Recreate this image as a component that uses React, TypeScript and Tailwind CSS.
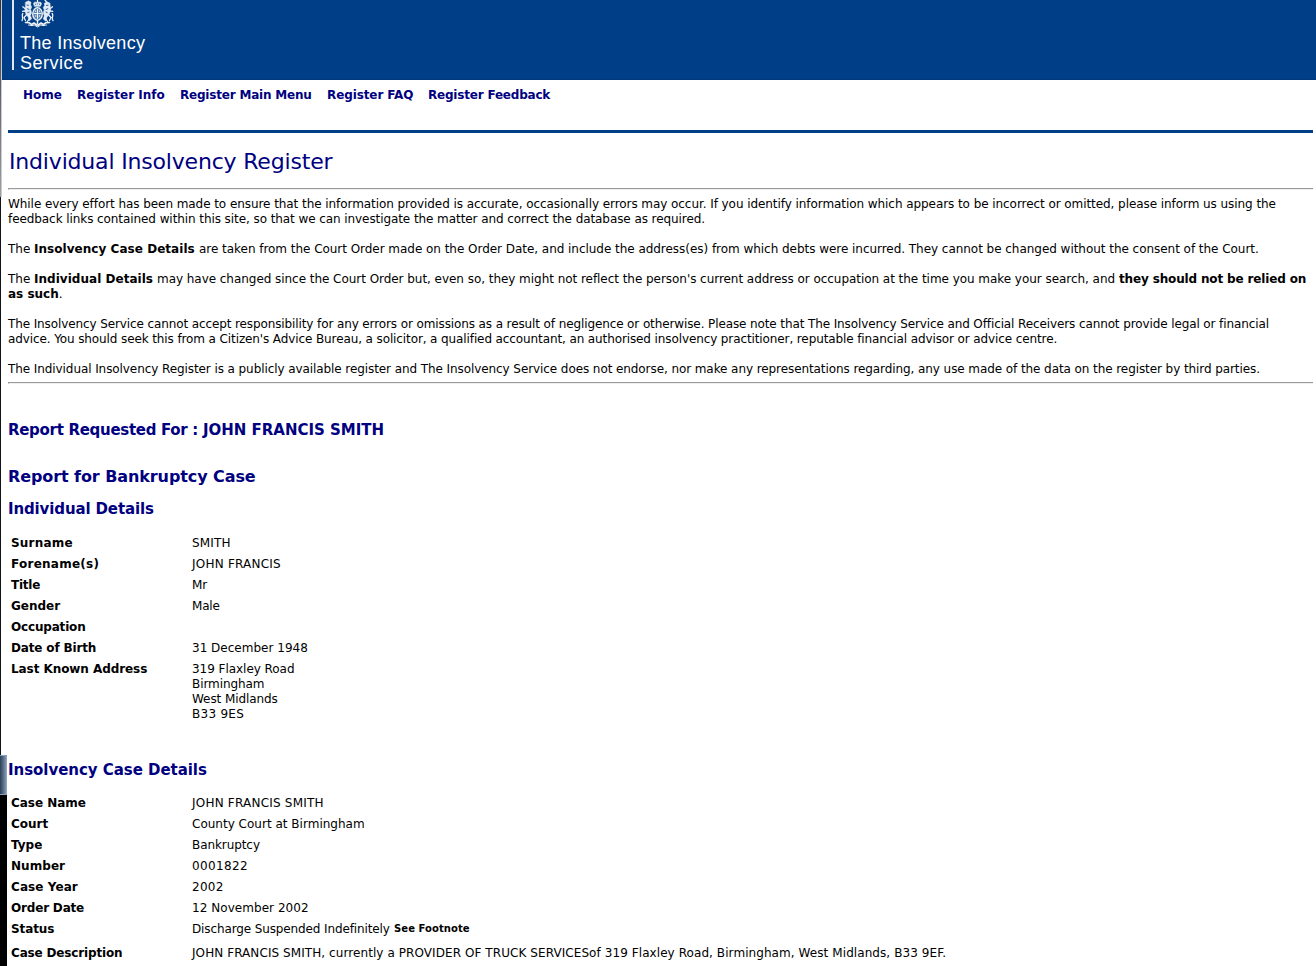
import type { ReactNode } from "react";

function Crest() {
  return (
    <svg width="34" height="28" viewBox="0 0 34 28" fill="none" stroke="#eef3f8" strokeLinecap="round" strokeLinejoin="round">
      {/* crown */}
      <path d="M13 4.800c-1.200-2 .2-3.300 3.500-2.300 3.300-1 4.700.3 3.500 2.300l-.6 1.400h-5.800z" strokeWidth=".7" fill="#dbe5f0" />
      <path d="M16.500 0v2" strokeWidth="1.200" />
      <path d="M14.500 4.300h.2M16.500 3.900h.1M18.400 4.300h.2" stroke="#003f87" strokeWidth=".8" />
      {/* lion */}
      <path d="M4.500 2.200L7.500.8l2.600 1.400-.5 2.600 1.100 2.200-1 2.600 1 3.200-1.200 2.800 1.200 3.200-2.600 2.200-1-4-2.200-2.600-1-4 .4-3.200z" fill="#e2eaf3" strokeWidth=".4" />
      <path d="M4 8.500L1.800 6.800M4.300 11L1.500 11.300M5.200 15.200L3 17.500 4.500 20.500M1 20.500c2-2.500-1-4.500.8-7M8.500 18.500L6.500 21.500" strokeWidth="1.300" />
      <path d="M6 5l1.500.3M6.300 8.800l1.700.6M6.800 12.500l1.200-.4" stroke="#003f87" strokeWidth=".8" />
      {/* unicorn */}
      <path d="M28.800 3L26 1.800l-3 1.600.8 1.800-1.600 2.300 1 2.400-1.100 3 1.200 2.900-1.100 3.200 2.600 2.200 1.100-4 2.200-2.600 1.500-4-.2-3.600z" fill="#e2eaf3" strokeWidth=".4" />
      <path d="M25.500 2L24 0M29.300 8.500l2.200-1.700M29 11l2.800.3M27.800 15.200l2.200 2.300-1.500 3M32 20.500c-2-2.500 1-4.500-.8-7M24.500 18.500l2 3" strokeWidth="1.300" />
      <path d="M27 5.200l-1.500.3M26.800 8.800l-1.700.6M26.200 12.500l-1.200-.4" stroke="#003f87" strokeWidth=".8" />
      {/* shield and garter */}
      <ellipse cx="16.500" cy="14" rx="4.800" ry="6.300" strokeWidth="1.300" fill="#5c86b3" />
      <path d="M16.500 9.500v9M13 13.500h7" strokeWidth="1" />
      <path d="M14.500 11.200h.1M18.500 11.200h.1M14.700 16h.1M18.300 16h.1" strokeWidth="1.300" />
      {/* motto ribbon */}
      <path d="M4.500 22.500l3.500.2 2.500 1.800 2.500-1.500 3.500 2.500 3.500-2.500 2.500 1.500 2.500-1.800 3.500-.2" strokeWidth="1.600" />
      <path d="M7.500 25l3.500.6 2.200-.6 3.300 2 3.300-2 2.200.6 3.500-.6" strokeWidth="1" />
      <path d="M16.500 20.500v3" strokeWidth="1.400" />
    </svg>
  );
}

const nav = [
  { label: "Home", cls: "w-[54px] tracking-[0.02px]" },
  { label: "Register Info", cls: "w-[103px] tracking-[0.01px]" },
  { label: "Register Main Menu", cls: "w-[147px] tracking-[-0.2px]" },
  { label: "Register FAQ", cls: "w-[101px] tracking-[-0.1px]" },
  { label: "Register Feedback", cls: "tracking-[-0.2px]" },
];

type RowData = { label: string; lt: string; value: ReactNode; vt: string };

const individual: RowData[] = [
  { label: "Surname", lt: "tracking-[0.2px]", value: "SMITH", vt: "tracking-[0.16px]" },
  { label: "Forename(s)", lt: "tracking-[0.26px]", value: "JOHN FRANCIS", vt: "tracking-[0.22px]" },
  { label: "Title", lt: "tracking-[-0.25px]", value: "Mr", vt: "" },
  { label: "Gender", lt: "", value: "Male", vt: "tracking-[-0.2px]" },
  { label: "Occupation", lt: "tracking-[-0.18px]", value: "", vt: "" },
  { label: "Date of Birth", lt: "tracking-[-0.16px]", value: "31 December 1948", vt: "tracking-[0.01px]" },
  {
    label: "Last Known Address",
    lt: "tracking-[-0.07px]",
    value: (
      <>
        <div className="tracking-[-0.04px]">319 Flaxley Road</div>
        <div className="tracking-[-0.08px]">Birmingham</div>
        <div className="tracking-[-0.08px]">West Midlands</div>
        <div className="tracking-[0.28px]">B33 9ES</div>
      </>
    ),
    vt: "",
  },
];

const insolvency: RowData[] = [
  { label: "Case Name", lt: "tracking-[-0.03px]", value: "JOHN FRANCIS SMITH", vt: "tracking-[0.21px]" },
  { label: "Court", lt: "", value: "County Court at Birmingham", vt: "tracking-[0.01px]" },
  { label: "Type", lt: "", value: "Bankruptcy", vt: "tracking-[-0.08px]" },
  { label: "Number", lt: "tracking-[0.05px]", value: "0001822", vt: "tracking-[0.38px]" },
  { label: "Case Year", lt: "tracking-[0.08px]", value: "2002", vt: "tracking-[0.3px]" },
  { label: "Order Date", lt: "tracking-[-0.18px]", value: "12 November 2002", vt: "tracking-[0.05px]" },
  {
    label: "Status",
    lt: "tracking-[-0.1px]",
    value: (
      <div className="flex h-[18px]">
        <span className="w-[202px] tracking-[-0.12px]">Discharge Suspended Indefinitely</span>
        <b className="text-[10px] leading-[13px] tracking-[0.08px]">See Footnote</b>
      </div>
    ),
    vt: "",
  },
  {
    label: "Case Description",
    lt: "tracking-[-0.16px]",
    value: "JOHN FRANCIS SMITH, currently a PROVIDER OF TRUCK SERVICESof 319 Flaxley Road, Birmingham, West Midlands, B33 9EF.",
    vt: "tracking-[0.076px]",
  },
];

function Details({ rows }: { rows: RowData[] }) {
  return (
    <dl className="pl-[3px]">
      {rows.map((r) => (
        <div key={r.label} className="flex pt-[4px] pb-[2px]">
          <dt className={`w-[181px] font-bold ${r.lt}`}>{r.label}</dt>
          <dd className={r.vt}>{r.value}</dd>
        </div>
      ))}
    </dl>
  );
}

function Rule() {
  return <div className="mr-[3px] h-[2px] border-t border-l border-b border-t-[#9a9a9a] border-l-[#9a9a9a] border-b-[#eeeeee]" />;
}

export default function App() {
  return (
    <div className="relative h-[966px] w-[1316px] overflow-hidden bg-white font-['DejaVu_Sans',Verdana,sans-serif] text-[12px] leading-[15px] whitespace-nowrap text-black">
      <header className="ml-[2px] flex h-[80px] border-b border-[#00387a] bg-[#003f87] pl-[10px]">
        <div className="h-[70px] w-[2px] bg-[#dfe8f1]" />
        <div className="pl-[6px] font-['Liberation_Sans',Arial,sans-serif] text-[18px] leading-[20px] text-white">
          <div className="h-[33px] pl-[1px]">
            <Crest />
          </div>
          <div className="tracking-[0.3px]">The Insolvency</div>
          <div className="tracking-[0.5px]">Service</div>
        </div>
      </header>

      <div className="pl-[8px]">
        <nav className="flex h-[50px] pt-[8px] pl-[15px] font-bold text-[#000080]">
          {nav.map((n) => (
            <a key={n.label} className={n.cls}>
              {n.label}
            </a>
          ))}
        </nav>
        <div className="mr-[3px] h-[3px] bg-[#003f87]" />

        <h1 className="flex h-[55px] items-center pt-[2px] pl-[1px] text-[22px] tracking-[-0.18px] text-[#000080]">Individual Insolvency Register</h1>

        <Rule />

        <div className="flex flex-col gap-[15px] pt-[7px] pb-[5px]">
          <div>
            <p className="tracking-[-0.065px]">
              While every effort has been made to ensure that the information provided is accurate, occasionally errors may occur. If you identify information which appears to be incorrect or omitted, please inform us using the
            </p>
            <p className="tracking-[-0.078px]">
              feedback links contained within this site, so that we can investigate the matter and correct the database as required.
            </p>
          </div>
          <p className="flex">
            <span className="w-[26px]">The</span>
            <b className="w-[165px] tracking-[0.04px]">Insolvency Case Details</b>
            <span className="tracking-[-0.038px]">
              are taken from the Court Order made on the Order Date, and include the address(es) from which debts were incurred. They cannot be changed without the consent of the Court.
            </span>
          </p>
          <div>
            <p className="flex">
              <span className="w-[26px]">The</span>
              <b className="w-[123px] tracking-[0.03px]">Individual Details</b>
              <span className="w-[962px] tracking-[-0.044px]">
                may have changed since the Court Order but, even so, they might not reflect the person's current address or occupation at the time you make your search, and
              </span>
              <b className="tracking-[-0.15px]">they should not be relied on</b>
            </p>
            <p>
              <b>as such</b>.
            </p>
          </div>
          <div>
            <p className="tracking-[-0.11px]">
              The Insolvency Service cannot accept responsibility for any errors or omissions as a result of negligence or otherwise. Please note that The Insolvency Service and Official Receivers cannot provide legal or financial
            </p>
            <p className="tracking-[-0.109px]">
              advice. You should seek this from a Citizen's Advice Bureau, a solicitor, a qualified accountant, an authorised insolvency practitioner, reputable financial advisor or advice centre.
            </p>
          </div>
          <p className="tracking-[-0.082px]">
            The Individual Insolvency Register is a publicly available register and The Insolvency Service does not endorse, nor make any representations regarding, any use made of the data on the register by third parties.
          </p>
        </div>

        <Rule />

        <h2 className="flex pt-[36px] text-[15px] leading-[20px] font-bold text-[#000080]">
          <span className="w-[195px] tracking-[-0.3px]">Report Requested For :</span>
          <span className="tracking-[-0.02px]">JOHN FRANCIS SMITH</span>
        </h2>
        <h2 className="pt-[27px] text-[16px] leading-[20px] font-bold tracking-[-0.09px] text-[#000080]">Report for Bankruptcy Case</h2>
        <h3 className="pt-[12px] text-[15px] leading-[20px] font-bold tracking-[-0.13px] text-[#000080]">Individual Details</h3>
        <div className="pt-[13px]">
          <Details rows={individual} />
        </div>
        <h3 className="pt-[36px] text-[15px] leading-[20px] font-bold tracking-[-0.04px] text-[#000080]">Insolvency Case Details</h3>
        <div className="pt-[12px]">
          <Details rows={insolvency} />
        </div>
      </div>

      {/* window frame showing along the left edge */}
      <div className="absolute top-0 left-0 flex h-full w-[7px] flex-col">
        <div className="h-[197px] w-[2px] border-r border-[#c8ccd4] bg-linear-to-b from-[#30343c] to-[#a0a0a0]" />
        <div className="h-[558px] w-[1px] bg-[#10121c]" />
        <div className="h-[40px] w-[7px] border border-l-0 border-[#8fa3b8] bg-linear-to-r from-[#2c3f56] to-[#7f97b2]" />
        <div className="grow bg-black" />
      </div>
    </div>
  );
}
